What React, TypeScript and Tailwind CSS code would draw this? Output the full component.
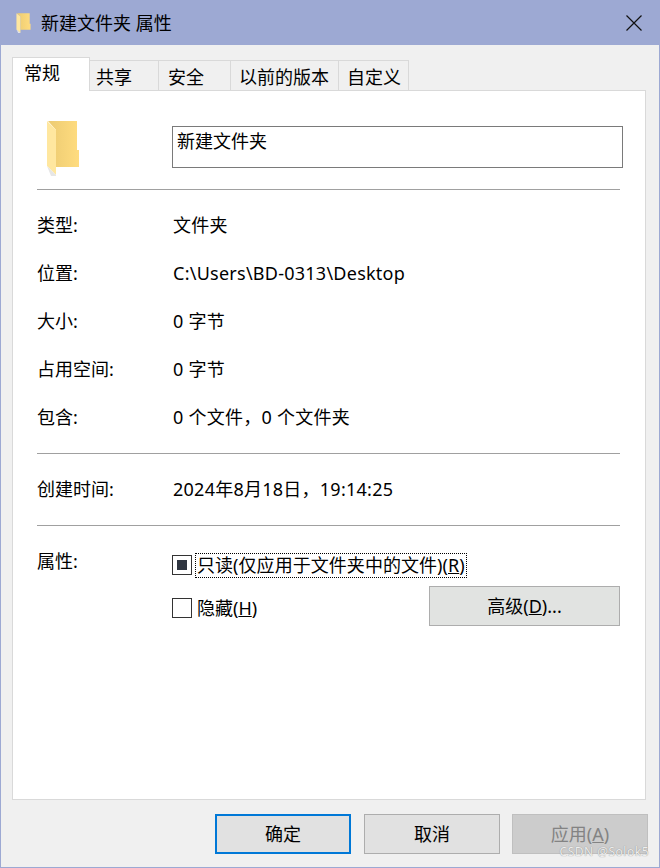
const fontFamily = { fontFamily: '"Noto Sans", "Noto Sans CJK SC", sans-serif' };

// folder glyph, drawn on a 34x56 grid
const FolderIcon = ({ className }: { className: string }) => (
  <svg className={className} viewBox="0 0 34 56" preserveAspectRatio="none">
    <defs>
      <linearGradient id="back" x1="0" x2="1" y1="0" y2="0">
        <stop offset="0" stopColor="#eccb72" />
        <stop offset="1" stopColor="#ffdc7f" />
      </linearGradient>
    </defs>
    <path d="M2 1H31V30H33V47H10V10Z" fill="url(#back)" />
    <path d="M1 1L10 10V55L1 46Z" fill="#ffe79f" />
    <path d="M1 46L10 55V56H5Z" fill="#e6e6e6" />
  </svg>
);

const tabs = [
  { label: "共享", className: "w-[69px] pl-[6px]" },
  { label: "安全", className: "w-[72px] pl-[9px]" },
  { label: "以前的版本", className: "w-[108px] pl-[8px]" },
  { label: "自定义", className: "w-[70px] pl-[8px]" },
];

const rows = [
  { label: "类型:", value: "文件夹" },
  { label: "位置:", value: "C:\\Users\\BD-0313\\Desktop" },
  { label: "大小:", value: "0 字节" },
  { label: "占用空间:", value: "0 字节" },
  { label: "包含:", value: "0 个文件，0 个文件夹" },
];

const Row = ({ label, value }: { label: string; value: string }) => (
  <div className="flex h-12 items-center">
    <span className="w-[136px]">{label}</span>
    <span className="tracking-[0.25px]">{value}</span>
  </div>
);

export default function App() {
  return (
    <div
      className="relative flex h-[868px] w-[660px] flex-col border border-[#9da9d3] bg-[#f0f0f0] text-[18px] leading-6 text-black"
      style={fontFamily}
    >
      <div className="flex h-[44px] shrink-0 items-center bg-[#9da9d3] pl-[15px] pr-[17px]">
        <FolderIcon className="h-[20px] w-[15px]" />
        <span className="ml-[10px] flex-1">新建文件夹 属性</span>
        <svg className="h-4 w-4" viewBox="0 0 16 16" stroke="#111" strokeWidth="1.2">
          <path d="M0.5 0.5L15.5 15.5M15.5 0.5L0.5 15.5" />
        </svg>
      </div>

      <div className="flex flex-1 flex-col pl-[11px] pr-[13px]">
        <div className="mt-[12px] flex h-[33px] items-end">
          <div className="relative z-10 -mb-px flex h-[34px] w-[78px] items-start border border-b-0 border-[#d9d9d9] bg-white pl-[11px] pt-[3px]">
            常规
          </div>
          {tabs.map((tab) => (
            <div
              key={tab.label}
              className={`-mb-px flex h-[31px] items-center border border-l-0 border-[#d9d9d9] pt-[3px] ${tab.className}`}
            >
              {tab.label}
            </div>
          ))}
        </div>

        <div className="h-[710px] border border-[#d9d9d9] bg-white pl-[24px] pr-[25px] pt-[29px]">
          <div className="flex h-[56px] items-start">
            <div className="w-[135px] pl-[9px]">
              <FolderIcon className="h-[56px] w-[34px]" />
            </div>
            <div className="-mr-[3px] mt-[6px] h-[42px] flex-1 border border-[#7a7a7a] pl-1 pt-[2px]">新建文件夹</div>
          </div>
          <div className="mt-[13px] border-t border-[#a0a0a0]" />

          <div className="mt-[11px]">
            {rows.map((row) => (
              <Row key={row.label} label={row.label} value={row.value} />
            ))}
          </div>
          <div className="mt-[12px] border-t border-[#a0a0a0]" />

          <div className="mt-[11px]">
            <Row label="创建时间:" value="2024年8月18日，19:14:25" />
          </div>
          <div className="mt-[12px] border-t border-[#a0a0a0]" />

          <div className="mt-[23px] flex items-start">
            <span className="w-[135px]">属性:</span>
            <div className="flex-1">
              <div className="mt-[4px] flex h-[24px] items-center">
                <span className="flex h-5 w-5 items-center justify-center border border-[#333]">
                  <span className="h-[10px] w-[10px] bg-[#2f3540]" />
                </span>
                <span className="ml-[3px] border border-dotted border-black px-px leading-[23px] tracking-[0.05px]">
                  只读(仅应用于文件夹中的文件)(<u>R</u>)
                </span>
              </div>
              <div className="mt-[9px] flex items-start justify-between">
                <div className="mt-[9px] flex items-center">
                  <span className="h-5 w-5 border border-[#333]" />
                  <span className="ml-[5px] pt-px">
                    隐藏(<u>H</u>)
                  </span>
                </div>
                <div className="flex h-10 w-[191px] items-center justify-center border border-[#adadad] bg-[#e1e3e1]">
                  高级(<u>D</u>)...
                </div>
              </div>
            </div>
          </div>
        </div>

        <div className="-mr-[2px] mt-[14px] flex justify-end">
          <div className="flex h-10 w-[136px] items-center justify-center border-2 border-[#0078d7] bg-[#e1e1e1]">
            确定
          </div>
          <div className="ml-[13px] flex h-10 w-[136px] items-center justify-center border border-[#adadad] bg-[#e1e1e1]">
            取消
          </div>
          <div className="ml-3 flex h-10 w-[136px] items-center justify-center border border-[#bfbfbf] bg-[#cccccc] text-[#838383]">
            应用(<u>A</u>)
          </div>
        </div>
      </div>

      <span className="absolute bottom-[7px] right-[10px] text-[12px] leading-4 tracking-[0.5px] text-[#eeeeee] [text-shadow:0_0_1px_#777]">
        CSDN @Solok5
      </span>
    </div>
  );
}
